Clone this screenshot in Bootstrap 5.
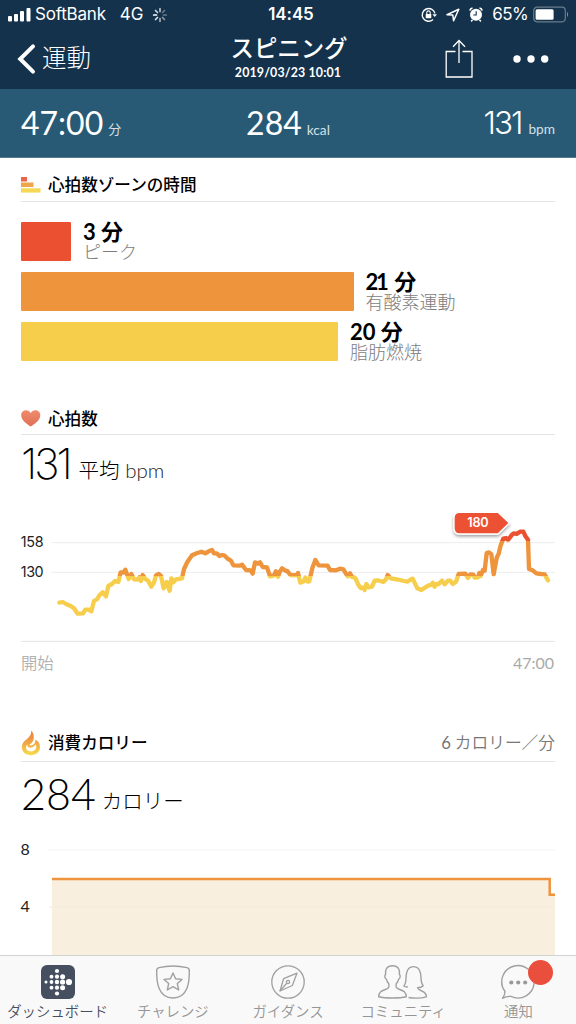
<!DOCTYPE html>
<html lang="ja">
<head>
<meta charset="utf-8">
<meta name="viewport" content="width=device-width, initial-scale=1">
<title>スピニング</title>
<link rel="stylesheet" href="https://cdn.jsdelivr.net/npm/bootstrap@5.3.0/dist/css/bootstrap.min.css">
<style>
  :root { --peak:#eb5131; --cardio:#ee943d; --fat:#f7ce4b; }
  body { width:576px; height:1024px; overflow:hidden; background:#fff; color:#000; font-family:Lato,"Noto Sans CJK JP",sans-serif; line-height:1; }
  svg { display:block; flex:none; overflow:visible; }
  .topbar { height:89px; background:#14324b; color:#fff; }
  .status { height:29px; padding:0 7px 0 8px; font-family:Inter,sans-serif; font-size:17px; }
  .carrier { letter-spacing:-.2px; }
  .clock { margin-left:5px; letter-spacing:-.1px; }
  .net { margin-left:14px; }
  .nav-arrow, .alarm, .pct { margin-left:9px; }
  .pct { letter-spacing:-.6px; }
  .batt { margin-left:5px; }
  .three { display:grid; grid-template-columns:minmax(0,1fr) auto minmax(0,1fr); align-items:center; }
  .titlebar { height:59px; padding:0 17px; }
  .titlebar .actions { margin-right:10px; }
  .more { margin-left:40px; }
  .back-label { font-size:24.5px; font-weight:300; margin-left:6px; }
  .page-title { font-size:23.4px; font-weight:500; line-height:27px; margin-top:-1px; padding-left:2px; }
  .page-date { font-size:12.4px; font-weight:700; letter-spacing:.15px; line-height:16px; margin-top:3px; }
  .totals { height:69px; background:#285a75; color:#fff; padding:0 21px; border-bottom:1px solid #537b91; }
  .total-num { font-size:32px; line-height:40px; }
  .total-num.ones { font-family:Inter; font-weight:350; font-size:31.5px; letter-spacing:-2px; margin-right:2px; }
  .total-unit { font-size:13.7px; color:#d5e0e6; margin-left:5px; }
  .total-unit.kanji { font-size:13px; position:relative; top:-1px; }
  .wrap { padding:0 21px; }
  .sec-head { border-bottom:1px solid #e4e4e4; }
  .ttl { font-size:16.6px; font-weight:500; line-height:1.2; margin:2px 0 0 7px; }
  .zone { height:39px; margin-bottom:11px; }
  .zone-bar { height:39px; border-radius:1px; }
  .zone-text { margin-left:12px; }
  .zone-val { font-size:22px; font-weight:700; line-height:20px; }
  .zone-val .tight { letter-spacing:-2.2px; }
  .zone-name { font-size:18px; font-weight:300; line-height:20px; color:#7d7d7d; }
  .big { font-size:43px; font-weight:300; line-height:50px; }
  .big.ones { font-family:Inter; font-weight:250; font-size:42.5px; letter-spacing:-3px; margin-right:3px; }
  .mid { font-size:20.5px; font-weight:300; margin-left:6px; position:relative; top:-1px; }
  .mid .bpm { color:#222; }
  .axis { font-size:16px; fill:#222; }
  .tabs { height:69px; background:#f9f9f9; border-top:1px solid #d3d3d3; color:#959595; z-index:2; }
  .tab-item { flex:1 1 0; padding-top:9px; }
  .tab-item .lbl { font-size:14.4px; line-height:16px; margin-top:5px; white-space:nowrap; font-weight:350; }
  .tab-item.on { color:#464f60; }
  .dot { position:absolute; width:25px; height:25px; border-radius:50%; background:#ea4f3d; left:27px; top:-5px; }
  .rate { font-size:16.7px; color:#777; font-weight:350; margin-top:2px; }
  .rate .num { font-weight:400; margin-right:-.5px; }
</style>
</head>
<body class="d-flex flex-column">
<header class="topbar flex-shrink-0">
  <div class="status three">
    <div class="d-flex align-items-center">
      <svg width="23" height="15" viewBox="0 0 23 15" fill="#fff"><rect x="0" y="9" width="4" height="5.500" rx="1"/><rect x="6" y="7" width="4" height="7.500" rx="1"/><rect x="12" y="4" width="4" height="10.500" rx="1"/><rect x="18.500" y="1" width="4" height="13.500" rx="1"/></svg>
      <span class="carrier ms-1">SoftBank</span><span class="net">4G</span>
      <svg class="ms-2" width="16" height="16" viewBox="-8 -8 16 16" stroke="#fff" stroke-width="1.700" stroke-linecap="round"><path d="M0-3.500V-6.300" opacity=".7"/><path d="M2.500-2.500L4.500-4.500" opacity=".35"/><path d="M3.500 0H6.300" opacity=".35"/><path d="M2.500 2.500L4.500 4.500" opacity=".5"/><path d="M0 3.500V6.300" opacity=".6"/><path d="M-2.500 2.500L-4.500 4.500" opacity=".85"/><path d="M-3.500 0H-6.300"/><path d="M-2.500-2.500L-4.500-4.500" opacity=".8"/></svg>
    </div>
    <div class="clock fw-semibold">14:45</div>
    <div class="d-flex align-items-center justify-content-end">
      <svg width="16" height="16" viewBox="0 0 16 16" fill="none" stroke="#fff" stroke-width="1.400"><path d="M13.900 6.400A6.400 6.400 0 1 0 12 12.600"/><path d="M11.400 7.200h4.600L13.700 10z" fill="#fff" stroke="none"/><rect x="4.700" y="7" width="5.600" height="4.200" rx=".6" fill="#fff" stroke="none"/><path d="M5.800 7V5.600a1.700 1.700 0 0 1 3.400 0V7" stroke-width="1.100"/></svg>
      <svg class="nav-arrow" width="14" height="14" viewBox="0 0 14 14" fill="none" stroke="#fff" stroke-width="1.500" stroke-linejoin="round"><path d="M1 6.700L12.800 1.200 7.600 12.800 6.800 7.100z"/></svg>
      <svg class="alarm" width="14" height="15" viewBox="0 0 14 15"><circle cx="7" cy="7.800" r="6" fill="#fff"/><path d="M3.500 13l-1.400 1.400M10.500 13l1.400 1.400M.8 3.600Q1.200 1.400 3.500 1M13.200 3.600Q12.800 1.400 10.500 1" stroke="#fff" stroke-width="1.500" fill="none"/><path d="M7.200 4.300V8H4.300" stroke="#14324b" stroke-width="1.100" fill="none"/></svg>
      <span class="pct">65%</span>
      <svg class="batt" width="36" height="17" viewBox="0 0 36 17"><rect x=".7" y="1.200" width="31.600" height="14.600" rx="3.500" fill="none" stroke="#687d8d" stroke-width="1.200"/><rect x="2.600" y="3.200" width="18" height="10.600" rx="1.500" fill="#fff"/><path d="M34 5.800q2.200 2.700 0 5.400z" fill="#8191a0"/></svg>
    </div>
  </div>
  <div class="titlebar three">
    <div class="d-flex align-items-center">
      <svg width="19" height="30" viewBox="0 0 19 30" fill="none" stroke="#fff" stroke-width="4" stroke-linecap="round"><path d="M16 2.300L3.200 15 16 27.700"/></svg>
      <span class="back-label">運動</span>
    </div>
    <div class="text-center"><div class="page-title">スピニング</div><div class="page-date">2019/03/23 10:01</div></div>
    <div class="actions d-flex align-items-center justify-content-end">
      <svg width="28" height="39" viewBox="0 0 28 39" fill="none" stroke="#fff" stroke-width="1.300"><path d="M10.500 12.500H1.200V38H27V12.500H17.500M14 24V2M8 7.800L14 1.500 20 7.800"/></svg>
      <svg class="more" width="36" height="8" viewBox="0 0 36 8" fill="#fff"><circle cx="4" cy="4" r="3.700"/><circle cx="18" cy="4" r="3.700"/><circle cx="31.700" cy="4" r="3.700"/></svg>
    </div>
  </div>
</header>
<section class="totals three flex-shrink-0">
  <div class="d-flex align-items-baseline"><span class="total-num">47:00</span><span class="total-unit kanji">分</span></div>
  <div class="d-flex align-items-baseline"><span class="total-num">284</span><span class="total-unit">kcal</span></div>
  <div class="d-flex align-items-baseline justify-content-end"><span class="total-num ones">131</span><span class="total-unit">bpm</span></div>
</section>
<main class="wrap flex-fill overflow-hidden">
  <section style="height:242px">
    <div class="sec-head d-flex align-items-center" style="height:44px;padding-top:11px">
      <svg width="20" height="16" viewBox="0 0 20 16"><path d="M0 0h6v4.500H0z" fill="#ec6448"/><path d="M0 5.500h12.500V10H0z" fill="#efa54a"/><path d="M0 11.300h19.500v4.300H0z" fill="#f6d857"/></svg>
      <h2 class="ttl">心拍数ゾーンの時間</h2>
    </div>
    <div style="padding-top:20px">
      <div class="zone d-flex"><div class="zone-bar" style="width:50px;background:var(--peak)"></div><div class="zone-text"><div class="zone-val">3 分</div><div class="zone-name">ピーク</div></div></div>
      <div class="zone d-flex"><div class="zone-bar" style="width:332.500px;background:var(--cardio)"></div><div class="zone-text"><div class="zone-val"><span class="tight">2</span>1 分</div><div class="zone-name">有酸素運動</div></div></div>
      <div class="zone d-flex"><div class="zone-bar" style="width:317px;background:var(--fat)"></div><div class="zone-text"><div class="zone-val">20 分</div><div class="zone-name">脂肪燃焼</div></div></div>
    </div>
  </section>
  <section style="height:324px">
    <div class="sec-head d-flex align-items-center" style="height:35px;padding-top:3px">
      <svg width="20" height="17" viewBox="0 0 20 17"><path d="M9.700 16.500C5.500 14 .2 10 .2 5.300.2-.4 7.400-1.300 9.700 3.200 12-1.300 19.300-.4 19.300 5.300c0 4.700-5.300 8.700-9.600 11.200z" fill="url(#hg)"/><defs><linearGradient id="hg" x2="0" y2="1"><stop stop-color="#ef8b6b"/><stop offset="1" stop-color="#df6f58"/></linearGradient></defs></svg>
      <h2 class="ttl">心拍数</h2>
    </div>
    <div class="d-flex align-items-baseline" style="height:65px;padding-top:4px"><span class="big ones">131</span><span class="mid">平均 <span class="bpm">bpm</span></span></div>
    <!-- heart-rate trace: three drawing units per pixel, stroke colour switches at the zone limits -->
    <svg width="534" height="190" viewBox="63 0 1602 570">
      <defs><linearGradient id="zones" gradientUnits="userSpaceOnUse" x1="0" y1="0" x2="0" y2="400"><stop offset=".31" stop-color="#eb5131"/><stop offset=".31" stop-color="#ee943d"/><stop offset=".571" stop-color="#ee943d"/><stop offset=".571" stop-color="#f7ce4b"/></linearGradient>
      <filter id="tipshadow" x="-20%" y="-20%" width="140%" height="160%"><feDropShadow dx="0" dy="6" stdDeviation="5" flood-opacity=".35"/></filter></defs>
      <path d="M154 128H1665M154 217H1665" stroke="#ededed" stroke-width="3"/><path d="M63 424H1665" stroke="#e4e4e4" stroke-width="3"/>
      <g font-size="43" fill="#222" font-family="Inter"><text x="62" y="142" textLength="69">158</text><text x="62" y="231" textLength="69">130</text></g>
      <text x="63" y="507" font-size="49" font-weight="350" fill="#b0b0b0">開始</text><text x="1662" y="507" font-size="48" text-anchor="end" fill="#aaa" textLength="123">47:00</text>
      <path d="M178 308L188 306 198 312 212 318 222 325 233 341 249 340 256 329 266 329 274 334 282 303 292 297 298 286 308 277 318 289 325 258 336 252 345 243 355 246 362 217 370 218 376 209 386 237 394 222 402 238 412 239 418 232 423 243 428 225 436 237 444 242 454 260 462 247 468 226 476 222 483 228 491 265 500 246 509 272 514 235 520 247 528 238 546 235 552 207 562 186 576 166 590 160 604 155 616 160 626 154 636 150 642 160 650 160 658 168 666 165 674 167 684 177 692 181 700 196 720 197 726 194 738 210 752 211 758 221 765 187 774 191 780 187 788 201 801 202 810 229 822 226 828 214 834 230 840 214 846 205 858 213 862 213 871 225 890 226 894 219 901 248 911 244 916 233 923 245 928 244 937 204 946 180 956 196 983 197 990 210 1008 211 1020 206 1030 208 1043 229 1050 220 1056 231 1066 234 1076 256 1082 264 1090 263 1094 270 1099 252 1106 262 1116 260 1124 242 1132 241 1142 243 1150 246 1158 238 1163 225 1172 235 1190 238 1200 240 1212 243 1222 245 1230 240 1238 236 1252 265 1264 270 1276 262 1286 256 1296 254 1298 248 1304 260 1309 252 1316 252 1326 242 1334 253 1344 242 1351 242 1358 252 1368 245 1376 222 1396 221 1404 234 1411 223 1420 224 1424 233 1434 232 1438 219 1442 228 1449 210 1454 212 1460 159 1466 157 1474 163 1481 223 1490 174 1496 161 1502 136 1510 116 1518 114 1524 120 1536 104 1541 100 1550 102 1560 95 1570 95 1576 108 1584 119 1587 207 1598 211 1609 220 1622 222 1634 223 1644 241" fill="none" stroke="url(#zones)" stroke-width="13" stroke-linejoin="round" stroke-linecap="round"/>
      <g filter="url(#tipshadow)"><path d="M1379 37H1494L1528 69 1494 102H1379Q1362 102 1362 85V54Q1362 37 1379 37Z" fill="#eb5131" stroke="#fff" stroke-width="4"/></g>
      <text x="1402" y="82" font-size="38" font-weight="600" font-family="Inter" fill="#fff" textLength="64">180</text>
    </svg>
  </section>
  <section>
    <div class="sec-head d-flex align-items-center justify-content-between" style="height:38px">
      <div class="d-flex align-items-center"><svg width="20" height="26" viewBox="0 0 20 26"><defs><linearGradient id="fg" x1="0" y1="0" x2="0" y2="1"><stop stop-color="#ec793b"/><stop offset=".5" stop-color="#efa747"/><stop offset="1" stop-color="#f7dd4e"/></linearGradient></defs><path d="M10.200.5C10.500 4 9 6.500 6 9 2.500 11.500.8 13.800.8 17 .8 22 4.800 25.200 10 25.200s9-3.400 9-8.200c0-3.800-2-6.300-4.800-7.500.6 2.500-.4 4.300-2.200 5.200-1.500.8-3.300.8-3.700.3 1.500-1.300 4.200-3.200 4.500-6.500C13 5.300 12.300 2.500 10.200.5zM6.200 14.500C6 17 8 18.200 10.500 17.500c2-.5 3.500-1.800 4.200-3.200 1.600 3.600-.4 7.200-4.700 7.200-4.400 0-6.400-3.800-3.800-7z" fill="url(#fg)" fill-rule="evenodd"/></svg><h2 class="ttl">消費カロリー</h2></div>
      <span class="rate"><span class="num">6</span> カロリー／分</span>
    </div>
    <div class="d-flex align-items-baseline" style="height:68px;padding-top:7px"><span class="big">284</span><span class="mid">カロリー</span></div>
    <svg width="534" height="130" viewBox="21 830 534 130">
      <path d="M52 878.500H550V895H555V960H52z" fill="#f9efdf"/><path d="M49 850H555" stroke="#f4f4f4"/><path d="M49 907H555" stroke="#f4ead9"/>
      <path d="M52 879H549.700V894.700H555" fill="none" stroke="#ee943d" stroke-width="2.500"/>
      <g class="axis"><text x="20.500" y="855">8</text><text x="20.500" y="912">4</text></g>
    </svg>
  </section>
</main>
<nav class="tabs d-flex flex-shrink-0 position-relative text-center">
  <div class="tab-item on d-flex flex-column align-items-center"><svg width="34" height="34" viewBox="0 0 34 34"><rect width="34" height="34" rx="6" fill="#464f60"/><g fill="#fff"><circle cx="5" cy="17" r="1.500"/><circle cx="10.500" cy="11.700" r="1.900"/><circle cx="10.500" cy="17" r="1.900"/><circle cx="10.500" cy="22.700" r="1.900"/><circle cx="16" cy="6" r="2.100"/><circle cx="16" cy="11.700" r="2.100"/><circle cx="16" cy="17" r="2.200"/><circle cx="16" cy="22.700" r="2.100"/><circle cx="16" cy="28.500" r="2.100"/><circle cx="21.600" cy="11.700" r="2.500"/><circle cx="21.600" cy="17" r="2.600"/><circle cx="21.600" cy="22.700" r="2.500"/><circle cx="28" cy="17" r="3.100"/></g></svg><div class="lbl">ダッシュボード</div></div>
  <div class="tab-item d-flex flex-column align-items-center"><svg width="34" height="34" viewBox="0 0 34 34" fill="none" stroke="#a0a0a0" stroke-width="1.400" stroke-linejoin="round"><path d="M3 2.600Q17-.6 31 2.600 33.300 3.200 33.300 5.500C33.500 17 32 33 17 33S.5 17 .7 5.500Q.7 3.200 3 2.600z"/><path d="M17 8l2.600 5.700 6.400.7-4.700 4.200 1.400 6.400-5.700-3.300L11.300 25l1.400-6.400L8 14.400l6.400-.7z"/></svg><div class="lbl">チャレンジ</div></div>
  <div class="tab-item d-flex flex-column align-items-center"><svg width="34" height="34" viewBox="0 0 34 34" fill="none" stroke="#a0a0a0" stroke-width="1.300" stroke-linejoin="round"><circle cx="17" cy="17" r="16.200"/><path d="M26 8.200L21.300 20.500 9 26l3.600-12.300z"/><circle cx="17" cy="17" r="1.600"/><path d="M9 26l6.500-7.500"/></svg><div class="lbl">ガイダンス</div></div>
  <div class="tab-item d-flex flex-column align-items-center"><svg style="margin-right:2px" width="49" height="34" viewBox="0 0 49 34" fill="none" stroke="#a0a0a0" stroke-width="1.400" stroke-linejoin="round"><path d="M14.500.8C8.500.8 7 5 7.600 9.500c-1.400.4-.8 4.200.8 4.600.4 2.300 1.300 3.600 2.500 4.800v3C9.500 26 .8 23.500.7 31.800 7 33.400 22 33.400 28.300 31.800 28.200 23.500 19.500 26 18.100 21.900v-3c1.200-1.200 2.100-2.500 2.500-4.800 1.600-.4 2.200-4.200.8-4.600C22 5 20.500.8 14.500.8z"/><path d="M30 21.700c-1.500.6-3 .2-4.200-.7 3-2.500 1.700-8 2.700-12.700C29.500 3.500 32 1.600 35.500 1.600s6 1.900 7 6.700c1 4.700-.3 9 2.700 12.400-1.400 1.500-4 2-5.700 2 1 4 8.800 2.200 9 9.100-4.500 1.300-12.500 1.600-18 .7"/></svg><div class="lbl">コミュニティ</div></div>
  <div class="tab-item d-flex flex-column align-items-center"><div class="position-relative"><svg width="34" height="34" viewBox="0 0 34 34" fill="none" stroke="#a0a0a0" stroke-width="1.400" stroke-linejoin="round"><path d="M4 26.500A16.200 16.200 0 1 1 10 31.400Q5.500 31 1.500 33.300 4 30.300 4 26.500z"/><g fill="#999" stroke="none"><circle cx="10.300" cy="17.500" r="2.100"/><circle cx="17.200" cy="17.500" r="2.100"/><circle cx="24.200" cy="17.500" r="2.100"/></g></svg><span class="dot"></span></div><div class="lbl">通知</div></div>
</nav>
<script src="https://cdn.jsdelivr.net/npm/bootstrap@5.3.0/dist/js/bootstrap.bundle.min.js"></script>
</body>
</html>
